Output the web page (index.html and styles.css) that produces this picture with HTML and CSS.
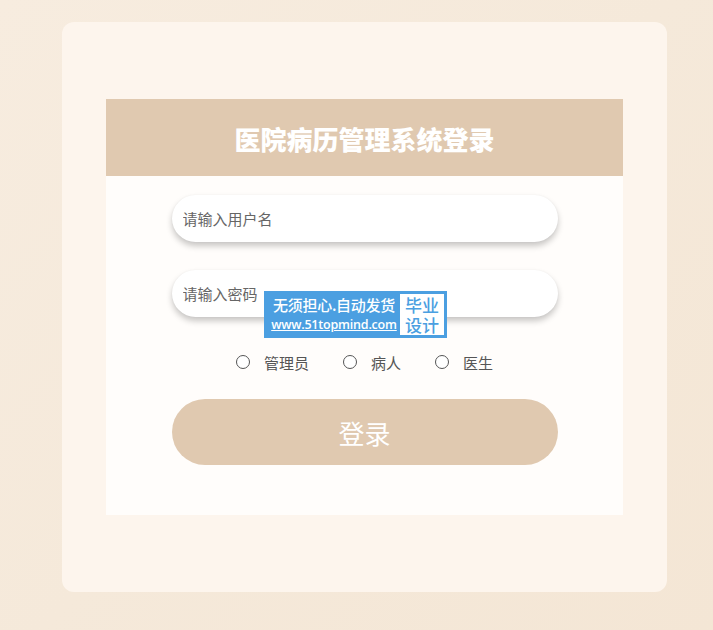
FILE: index.html
```html
<!DOCTYPE html>
<html lang="zh-CN">
<head>
<meta charset="utf-8">
<title>医院病历管理系统登录</title>
<link rel="stylesheet" href="styles.css">
</head>
<body>
<div class="page">
  <div class="card">
    <div class="panel">
      <div class="panel-head">医院病历管理系统登录</div>
      <div class="panel-body">
        <input class="field" type="text" placeholder="请输入用户名">
        <input class="field field-pwd" type="password" placeholder="请输入密码">
        <div class="roles">
          <label class="role"><input type="radio" name="role"><span>管理员</span></label>
          <label class="role"><input type="radio" name="role"><span>病人</span></label>
          <label class="role"><input type="radio" name="role"><span>医生</span></label>
        </div>
        <button class="login" type="button">登录</button>
      </div>
    </div>
  </div>
</div>
<div class="badge">
  <div class="badge-left">
    <div class="badge-line1">无须担心.自动发货</div>
    <div class="badge-line2">www.51topmind.com</div>
  </div>
  <div class="badge-right">
    <div>毕业</div>
    <div>设计</div>
  </div>
</div>
</body>
</html>
```
FILE: styles.css
```css
html, body {
  margin: 0;
  padding: 0;
}
body {
  width: 713px;
  height: 630px;
  background: linear-gradient(135deg, #f7ecdf 0%, #f5e9da 50%, #f4e6d5 100%);
  font-family: "Noto Sans CJK SC", "Noto Sans", sans-serif;
  position: relative;
  overflow: hidden;
}
.page {
  padding: 22px 0 0 62px;
}
.card {
  width: 605px;
  height: 570px;
  box-sizing: border-box;
  background: #fdf5ed;
  border-radius: 12px;
  padding: 77px 44px 0 44px;
}
.panel {
  width: 517px;
  height: 416px;
  background: #fffdfb;
}
.panel-head {
  height: 77px;
  background: #e0c9b0;
  color: #ffffff;
  font-size: 26px;
  font-weight: 900;
  display: flex;
  align-items: center;
  justify-content: center;
  padding-top: 1px;
  box-sizing: border-box;
}
.panel-body {
  display: flex;
  flex-direction: column;
  align-items: center;
  padding-top: 19px;
}
.field {
  width: 386px;
  height: 47px;
  box-sizing: border-box;
  border: none;
  outline: none;
  border-radius: 24px;
  background: #ffffff;
  box-shadow: 0 4px 6px rgba(0, 0, 0, 0.22), 0 0 2px rgba(0, 0, 0, 0.04);
  padding: 0 11px;
  font-family: "Noto Sans CJK SC", sans-serif;
  font-size: 15px;
  color: #555;
}
.field::placeholder {
  color: #666666;
}
.field-pwd {
  margin-top: 28px;
}
.roles {
  display: flex;
  align-items: center;
  gap: 34px;
  margin-top: 28px;
  height: 34px;
}
.role {
  display: flex;
  align-items: center;
  gap: 14px;
  font-size: 15px;
  color: #555555;
}
.role input {
  appearance: none;
  -webkit-appearance: none;
  box-sizing: border-box;
  width: 14px;
  height: 14px;
  margin: 0;
  border: 1px solid #555;
  border-radius: 50%;
  background: #fff;
}
.login {
  margin-top: 20px;
  width: 386px;
  height: 66px;
  border: none;
  border-radius: 33px;
  background: #e0c9b0;
  color: #ffffff;
  font-family: "Noto Sans CJK SC", sans-serif;
  font-size: 26px;
}
.badge {
  position: absolute;
  left: 264px;
  top: 291px;
  width: 183px;
  height: 47px;
  background: #4b9fe1;
  display: flex;
  align-items: center;
  box-sizing: border-box;
  padding: 3px 3px 3px 4px;
}
.badge-left {
  flex: 1;
  color: #ffffff;
  display: flex;
  flex-direction: column;
  align-items: center;
  line-height: 20px;
}
.badge-line1 {
  font-size: 15px;
  font-weight: 500;
  letter-spacing: -0.3px;
}
.badge-line2 {
  font-family: "Open Sans", "Noto Sans", sans-serif;
  font-size: 12.5px;
  font-weight: 600;
  text-decoration: underline;
  letter-spacing: -0.2px;
}
.badge-right {
  width: 44px;
  height: 41px;
  background: #ffffff;
  color: #4b9fe1;
  font-size: 17px;
  font-weight: 500;
  line-height: 20px;
  display: flex;
  flex-direction: column;
  align-items: center;
  justify-content: center;
}
```
